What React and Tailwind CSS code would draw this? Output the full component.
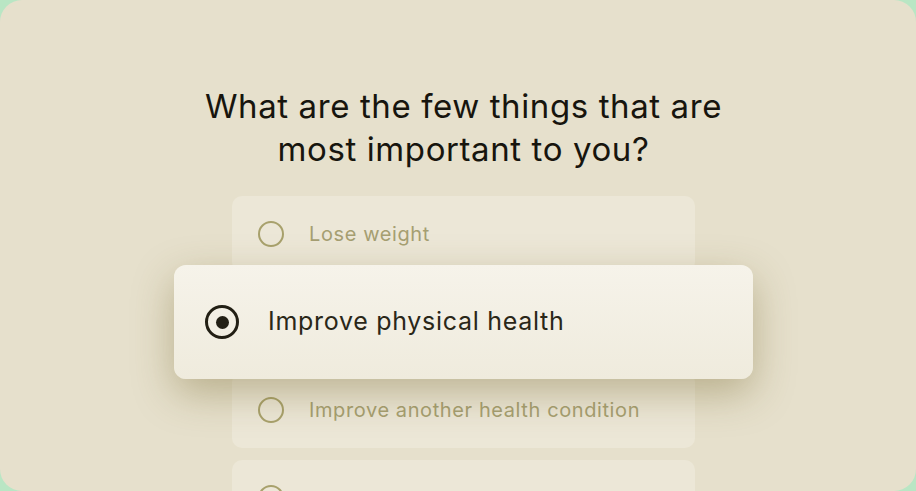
import React from 'react';

const options = [
  { label: 'Lose weight' },
  { label: 'Improve physical health', selected: true },
  { label: 'Improve another health condition' },
  { label: '' },
];

function Radio({ checked }) {
  if (checked) {
    return (
      <span className="flex h-[34px] w-[34px] shrink-0 items-center justify-center rounded-full border-[3px] border-[#221f14]">
        <span className="h-[13px] w-[13px] rounded-full bg-[#221f14]" />
      </span>
    );
  }
  return <span className="h-[26px] w-[26px] shrink-0 rounded-full border-2 border-[#a8a16c]" />;
}

function OptionRow({ label, selected }) {
  return (
    <div className={`flex h-[76px] items-center gap-[25px] rounded-[10px] bg-[#ece7d7] pl-[26px] ${selected ? 'opacity-0' : ''}`}>
      <Radio />
      <span className="text-[20px] tracking-[0.6px] text-[#a69f72]">{label}</span>
    </div>
  );
}

export default function App() {
  return (
    <div className="h-[491px] w-[916px] overflow-hidden bg-[#b9e6c4]" style={{ fontFamily: 'Inter, "Noto Sans", sans-serif' }}>
      <div className="relative flex h-full w-full flex-col items-center overflow-hidden rounded-[22px] bg-[#e6e0cc] pl-[11px]">
        <div className="h-[5px] w-[90px] rounded-b-full bg-[#ddd7c2]" />
        <h1 className="mt-[85px] text-center text-[33px] leading-[43px] tracking-[0.6px] text-[#17150e]">
          What are the few things that are
          <br />
          most important to you?
        </h1>

        <div className="relative mt-[25px] w-[463px]">
          <div className="flex flex-col gap-[12px]">
            {options.map((o, i) => (
              <OptionRow key={i} {...o} />
            ))}
          </div>

          {/* selected option lifted above the list */}
          <div className="absolute left-[-58px] top-[69px] flex h-[114px] w-[579px] items-center gap-[29px] rounded-[12px] bg-gradient-to-b from-[#f6f3ea] to-[#efebdd] pl-[31px] shadow-[0_14px_40px_rgba(110,95,35,0.38)]">
            <Radio checked />
            <span className="text-[25px] tracking-[0.7px] text-[#2a2718]">Improve physical health</span>
          </div>
        </div>
      </div>
    </div>
  );
}
